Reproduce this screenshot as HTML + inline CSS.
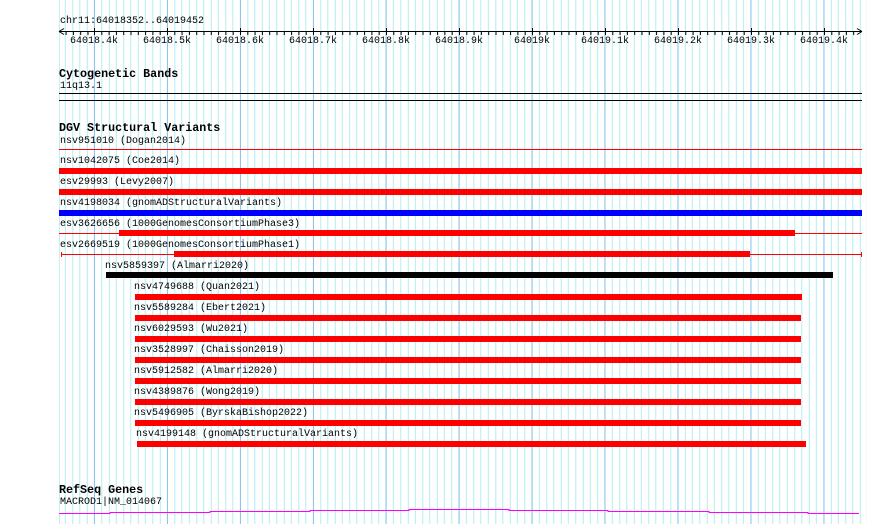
<!DOCTYPE html>
<html><head><style>
body{margin:0;width:890px;height:524px;background:#fff;position:relative;overflow:hidden;font-family:"Liberation Mono",monospace;font-size:10px;color:#000}
.grid{position:absolute;left:59px;top:0;width:808px;height:524px;
background-image:repeating-linear-gradient(to right,rgba(0,0,0,0) 0,rgba(0,0,0,0) 35px,#8ec4ee 35px,#8ec4ee 36px,rgba(0,0,0,0) 36px,rgba(0,0,0,0) 72.93px),
repeating-linear-gradient(to right,#b2ecf2 0,#b2ecf2 1px,rgba(0,0,0,0) 1px,rgba(0,0,0,0) 7.293px);
background-position:0 0,5.8px 0}
.t{position:absolute;white-space:nowrap;line-height:11px}
.b{font-weight:bold;font-size:11.7px}
.r{position:absolute;height:6px;background:#f00}
.l{position:absolute;height:1px}
</style></head><body>
<div class="grid"></div>
<div class="t" style="left:60px;top:16px">chr11:64018352..64019452</div>
<svg style="position:absolute;left:0;top:0" width="890" height="60">
<line x1="59" y1="31.5" x2="862" y2="31.5" stroke="#000"/>
<path d="M59 31.5 L64 28.5 M59 31.5 L64 34.5 M862 31.5 L857 28.5 M862 31.5 L857 34.5" stroke="#000"/>
</svg>
<div class="t" style="left:70px;top:36px">64018.4k</div>
<div class="t" style="left:143px;top:36px">64018.5k</div>
<div class="t" style="left:216px;top:36px">64018.6k</div>
<div class="t" style="left:289px;top:36px">64018.7k</div>
<div class="t" style="left:362px;top:36px">64018.8k</div>
<div class="t" style="left:435px;top:36px">64018.9k</div>
<div class="t" style="left:514px;top:36px">64019k</div>
<div class="t" style="left:581px;top:36px">64019.1k</div>
<div class="t" style="left:654px;top:36px">64019.2k</div>
<div class="t" style="left:727px;top:36px">64019.3k</div>
<div class="t" style="left:800px;top:36px">64019.4k</div>

<div class="t b" style="left:59px;top:69px">Cytogenetic Bands</div>
<div class="t" style="left:60px;top:81px">11q13.1</div>
<div class="l" style="left:59px;top:93px;width:803px;background:#000"></div>
<div class="l" style="left:59px;top:100px;width:803px;background:#000"></div>

<div class="t b" style="left:59px;top:123px">DGV Structural Variants</div>
<div class="t" style="left:60px;top:136px">nsv951010 (Dogan2014)</div>
<div class="l" style="left:59px;top:149px;width:803px;background:#f00"></div>
<div class="t" style="left:60px;top:156px">nsv1042075 (Coe2014)</div>
<div class="r" style="left:59px;top:168px;width:803px"></div>
<div class="t" style="left:60px;top:177px">esv29993 (Levy2007)</div>
<div class="r" style="left:59px;top:189px;width:803px"></div>
<div class="t" style="left:60px;top:198px">nsv4198034 (gnomADStructuralVariants)</div>
<div class="r" style="left:59px;top:210px;width:803px;background:#00f"></div>
<div class="t" style="left:60px;top:219px">esv3626656 (1000GenomesConsortiumPhase3)</div>
<div class="l" style="left:59px;top:233px;width:803px;background:#f00"></div>
<div class="r" style="left:119px;top:230px;width:676px"></div>
<div class="t" style="left:60px;top:240px">esv2669519 (1000GenomesConsortiumPhase1)</div>
<div class="l" style="left:61px;top:254px;width:801px;background:#f00"></div>
<div class="l" style="left:61px;top:252px;width:1px;height:5px;background:#f00"></div>
<div class="l" style="left:861px;top:252px;width:1px;height:5px;background:#f00"></div>
<div class="r" style="left:174px;top:251px;width:576px"></div>
<div class="t" style="left:105px;top:261px">nsv5859397 (Almarri2020)</div>
<div class="r" style="left:106px;top:272px;width:727px;background:#000"></div>
<div class="t" style="left:134px;top:282px">nsv4749688 (Quan2021)</div>
<div class="r" style="left:135px;top:294px;width:667px"></div>
<div class="t" style="left:134px;top:303px">nsv5589284 (Ebert2021)</div>
<div class="r" style="left:135px;top:315px;width:666px"></div>
<div class="t" style="left:134px;top:324px">nsv6029593 (Wu2021)</div>
<div class="r" style="left:135px;top:336px;width:666px"></div>
<div class="t" style="left:134px;top:345px">nsv3528997 (Chaisson2019)</div>
<div class="r" style="left:135px;top:357px;width:666px"></div>
<div class="t" style="left:134px;top:366px">nsv5912582 (Almarri2020)</div>
<div class="r" style="left:135px;top:378px;width:666px"></div>
<div class="t" style="left:134px;top:387px">nsv4389876 (Wong2019)</div>
<div class="r" style="left:135px;top:399px;width:666px"></div>
<div class="t" style="left:134px;top:408px">nsv5496905 (ByrskaBishop2022)</div>
<div class="r" style="left:135px;top:420px;width:666px"></div>
<div class="t" style="left:136px;top:429px">nsv4199148 (gnomADStructuralVariants)</div>
<div class="r" style="left:137px;top:441px;width:669px"></div>

<div class="t b" style="left:59px;top:485px">RefSeq Genes</div>
<div class="t" style="left:60px;top:497px">MACROD1|NM_014067</div>
<svg style="position:absolute;left:0;top:500px" width="890" height="24">
<path d="M59 13.5H110V12.5H210V11.5H310V10.5H409V9.5H509V10.5H608V11.5H709V12.5H808V13.5H859" fill="none" stroke="#f0f"/>
</svg>
<svg style="position:absolute;left:0;top:0" width="890" height="40">
<g stroke="#000">
<path d="M66.1 31v4M73.4 31v4M80.7 31v4M88 31v4M94.5 28v7M101.8 31v4M109.1 31v4M116.4 31v4M123.7 31v4M131 31v4M138.3 31v4M145.6 31v4M152.9 31v4M160.2 31v4M167.5 28v7M174.8 31v4M182.1 31v4M189.4 31v4M196.7 31v4M204 31v4M211.3 31v4M218.6 31v4M225.9 31v4M233.2 31v4M240.5 28v7M247.8 31v4M255.1 31v4M262.4 31v4M269.7 31v4M277 31v4M284.3 31v4M291.6 31v4M298.9 31v4M306.2 31v4M313.5 28v7M320.8 31v4M328.1 31v4M335.4 31v4M342.7 31v4M350 31v4M357.3 31v4M364.6 31v4M371.9 31v4M379.2 31v4M386.5 28v7M393.8 31v4M401.1 31v4M408.4 31v4M415.7 31v4M423 31v4M430.3 31v4M437.6 31v4M444.9 31v4M452.2 31v4M459.5 28v7M466.8 31v4M474.1 31v4M481.4 31v4M488.7 31v4M496 31v4M503.3 31v4M510.6 31v4M517.9 31v4M525.2 31v4M532.5 28v7M539.8 31v4M547.1 31v4M554.4 31v4M561.7 31v4M569 31v4M576.3 31v4M583.6 31v4M590.9 31v4M598.2 31v4M605.5 28v7M612.8 31v4M620.1 31v4M627.4 31v4M634.7 31v4M642 31v4M649.3 31v4M656.6 31v4M663.9 31v4M671.2 31v4M678.5 28v7M685.8 31v4M693.1 31v4M700.4 31v4M707.7 31v4M715 31v4M722.3 31v4M729.6 31v4M736.9 31v4M744.2 31v4M751.5 28v7M758.8 31v4M766.1 31v4M773.4 31v4M780.7 31v4M788 31v4M795.3 31v4M802.6 31v4M809.9 31v4M817.2 31v4M824.5 28v7M831.8 31v4M839.1 31v4M846.4 31v4M853.7 31v4"/>
</g></svg>
</body></html>
